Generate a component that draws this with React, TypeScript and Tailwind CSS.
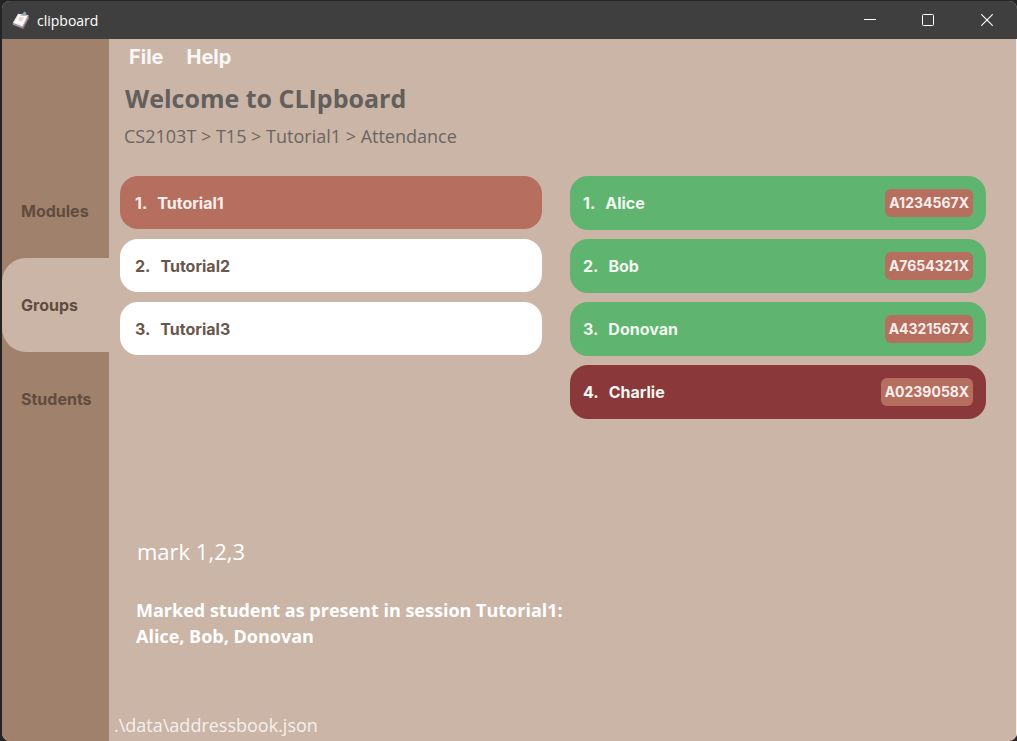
import { useState } from "react";

type Tab = "Modules" | "Groups" | "Students";

const tabs: Tab[] = ["Modules", "Groups", "Students"];

const sessions = ["Tutorial1", "Tutorial2", "Tutorial3"];

const students = [
  { name: "Alice", id: "A1234567X", present: true },
  { name: "Bob", id: "A7654321X", present: true },
  { name: "Donovan", id: "A4321567X", present: true },
  { name: "Charlie", id: "A0239058X", present: false },
];

function ClipboardIcon() {
  return (
    <svg width="18" height="18" viewBox="0 0 18 18" aria-hidden="true">
      <path d="M0.2 13 L6 3 L17 4 L17 7.5 L11.6 17.8 L9.4 17.4Z" fill="#8d6a66" />
      <path d="M0.8 12 L6.2 2.8 L16.2 4.2 L10.6 15.4Z" fill="#e9eef6" />
      <path d="M3 11.3 L7.2 4.2 L14.4 5.4 L10 13.8Z" fill="#ffffff" />
      <path d="M6 9.8 L7.6 5.4 L11.8 6.2 L10.4 10.6Z" fill="#efd3c4" />
      <path d="M8.4 4.4 L10.8 2.2 L12.6 0.6 L14 1.4 L14.6 4.8Z" fill="#93a5ab" />
      <path d="M1 13.4 L10.4 16.2 L16 6.4" fill="none" stroke="#b7bfd4" strokeWidth="0.8" />
    </svg>
  );
}

function TitleBar() {
  return (
    <header className="flex h-[38px] items-center justify-between bg-[#3f3f3f] text-white">
      <div className="flex items-center gap-[7px] pl-2.5">
        <ClipboardIcon />
        <span className="pt-px text-sm leading-5">clipboard</span>
      </div>
      <div className="flex h-full">
        <button aria-label="Minimize" className="flex w-[58px] items-center justify-center">
          <svg width="12" height="12" viewBox="0 0 12 12">
            <path d="M0 5.5H12" stroke="white" />
          </svg>
        </button>
        <button aria-label="Maximize" className="flex w-[58px] items-center justify-center">
          <svg width="12" height="12" viewBox="0 0 12 12">
            <rect x="0.5" y="0.5" width="11" height="11" rx="1" fill="none" stroke="white" />
          </svg>
        </button>
        <button aria-label="Close" className="flex w-[60px] items-center justify-center">
          <svg width="12" height="12" viewBox="0 0 12 12">
            <path d="M0.3 0.3L11.7 11.7M11.7 0.3L0.3 11.7" stroke="white" strokeWidth="1.1" />
          </svg>
        </button>
      </div>
    </header>
  );
}

export default function App() {
  const [tab, setTab] = useState<Tab>("Groups");
  const [selected, setSelected] = useState(0);
  const [command, setCommand] = useState("mark 1,2,3");

  return (
    <div className="min-h-screen bg-[#242424] pt-px pl-0.5 font-['Open_Sans',sans-serif]">
      <div className="flex min-h-[calc(100vh-1px)] flex-col overflow-hidden rounded-lg bg-[#cbb5a7]">
        <TitleBar />
        <div className="flex flex-1 border-r border-[#f3efec]">
          <nav className="flex w-[107px] shrink-0 flex-col bg-[#a0816c] pt-[125px]">
            {tabs.map((name) => (
              <button
                key={name}
                onClick={() => setTab(name)}
                className={
                  "h-[94px] rounded-l-3xl pl-[19px] text-left font-['Inter',sans-serif] text-base font-bold text-[#604c3f] " +
                  (name === tab ? "bg-[#cbb5a7]" : "")
                }
              >
                {name}
              </button>
            ))}
          </nav>

          <main className="flex min-w-0 flex-1 flex-col">
            <div className="flex h-9 items-center gap-[23px] pl-5 font-['Inter',sans-serif] text-xl font-bold text-[#faf7f6]">
              <button>File</button>
              <button>Help</button>
            </div>
            <h1 className="pl-4 text-[25px] leading-[46px] font-bold text-[#625f5d]">
              Welcome to CLIpboard
            </h1>
            <p className="pl-[15px] text-lg leading-[30px] text-[#6a6562]">
              CS2103T &gt; T15 &gt; Tutorial1 &gt; Attendance
            </p>

            <div className="grid grid-cols-[422fr_416fr] items-start gap-7 pt-[25px] pr-[30px] pl-[11px] font-['Inter',sans-serif] text-base font-bold">
              <ul className="flex flex-col gap-2.5">
                {sessions.map((name, i) => (
                  <li key={name}>
                    <button
                      onClick={() => setSelected(i)}
                      className={
                        "flex h-[53px] w-full items-center gap-2.5 rounded-[18px] px-[15px] " +
                        (i === selected ? "bg-[#b66e5e] text-[#f8efed]" : "bg-white text-[#6a564a]")
                      }
                    >
                      <span>{i + 1}.</span>
                      <span>{name}</span>
                    </button>
                  </li>
                ))}
              </ul>
              <ul className="flex flex-col gap-[9px]">
                {students.map((s, i) => (
                  <li
                    key={s.id}
                    className={
                      "flex h-[54px] items-center gap-2.5 rounded-[18px] px-[13px] text-[#f2f6f1] " +
                      (s.present ? "bg-[#5fb56f]" : "bg-[#8a383a]")
                    }
                  >
                    <span>{i + 1}.</span>
                    <span>{s.name}</span>
                    <span className="ml-auto rounded-md bg-[#b66e5e] px-1 text-sm leading-7 text-[#f8efed]">
                      {s.id}
                    </span>
                  </li>
                ))}
              </ul>
            </div>

            <div className="mt-auto flex flex-col pl-7">
              <input
                aria-label="Command"
                value={command}
                onChange={(e) => setCommand(e.target.value)}
                className="mr-8 h-12 bg-transparent text-[22px] text-white outline-none"
              />
              <p
                role="status"
                className="-ml-px pt-[22px] text-lg leading-[26px] font-bold text-white"
              >
                Marked student as present in session Tutorial1:
                <br />
                Alice, Bob, Donovan
              </p>
            </div>
            <footer className="pt-[62px] pb-0.5 pl-[5px] text-lg leading-7 text-[#f5f0ed]">
              .\data\addressbook.json
            </footer>
          </main>
        </div>
      </div>
    </div>
  );
}
